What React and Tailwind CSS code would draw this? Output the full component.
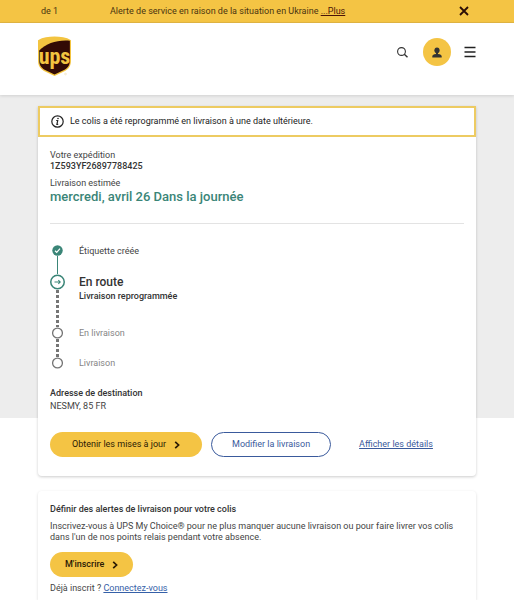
import { useState } from "react";

const steps = [
    { label: "Étiquette créée", status: "done" },
    { label: "En route", detail: "Livraison reprogrammée", status: "current" },
    { label: "En livraison", status: "pending" },
    { label: "Livraison", status: "pending" },
];

// Height of each row, up to the next circle
const rowHeights = ["min-h-[29px]", "min-h-[53px]", "min-h-[30px]", "min-h-[12px]"];

const UpsLogo = () => (
    <svg width="36" height="41" viewBox="0 0 36 41" role="img" aria-label="UPS">
        <path d="M1 4.200C6 1.400 11.500 .6 17.500 .6S29 1.400 34 4.200V24c0 5.500-2 8.700-6 10.900L17.500 40 7 34.900C3 32.700 1 29.500 1 24Z" fill="#f3c440" />
        <path d="M2.200 14.600C9.500 7.200 20 3.700 32.900 4.700V24c0 4.900-1.800 7.700-5.400 9.700L17.500 38.600 7.600 33.700C4 31.700 2.200 28.900 2.200 24Z" fill="#330b05" />
        <text x="17.500" y="27.500" textAnchor="middle" fill="#f3c440" className="font-['Roboto_Condensed','Roboto',sans-serif] text-[22px] font-bold">ups</text>
        <circle cx="28.500" cy="38" r=".9" fill="none" stroke="#ecd9a0" strokeWidth=".5" />
    </svg>
);

const Chevron = () => (
    <svg width="6" height="8" viewBox="0 0 6 8" fill="none" stroke="currentColor" strokeWidth="1.700" aria-hidden="true">
        <path d="M1.200 .8 4.600 4 1.200 7.200" />
    </svg>
);

const StepIcon = ({ status }) => {
    if (status === "done") {
        return (
            <svg width="11" height="11" viewBox="0 0 11 11" aria-hidden="true">
                <circle cx="5.500" cy="5.500" r="5.200" fill="#3a8577" />
                <path d="m3 5.800 1.700 1.500L8 3.700" fill="none" stroke="#fff" strokeWidth="1.200" />
            </svg>
        );
    }
    if (status === "current") {
        return (
            <svg width="15" height="16" viewBox="0 0 16 16" fill="none" stroke="#3a8577" aria-hidden="true">
                <circle cx="8" cy="8" r="7.200" strokeWidth="1.600" />
                <path d="M4.800 8h6M8.900 6.100 10.900 8 8.900 9.900" strokeWidth="1.100" />
            </svg>
        );
    }
    return (
        <svg width="11" height="12" viewBox="0 0 11 12" fill="none" stroke="#757575" strokeWidth="1.300" aria-hidden="true">
            <circle cx="5.500" cy="6" r="4.900" />
        </svg>
    );
};

const Step = ({ step, height, last }) => {
    const isCurrent = step.status === "current";
    const isPending = step.status === "pending";

    return (
        <li className={`flex gap-[14px] ${height}`}>
            <div className="flex w-[15px] flex-col items-center">
                <StepIcon status={step.status} />
                {!last && (
                    <div
                        className={
                            step.status === "done"
                                ? "w-px flex-1 bg-[#3a8577]"
                                : "w-[3px] flex-1 bg-[repeating-linear-gradient(#757575_0_3px,#ffffff_3px_5px)]"
                        }
                    />
                )}
            </div>
            <div>
                <p className={isCurrent ? "text-[12px] leading-4 font-medium text-[#333]" : `text-[9px] leading-3 ${isPending ? "text-[#858585]" : "text-[#444]"}`}>
                    {step.label}
                </p>
                {step.detail && <p className="text-[9px] leading-3 font-medium text-[#333]">{step.detail}</p>}
            </div>
        </li>
    );
};

const App = () => {
    const [showAlert, setShowAlert] = useState(true);

    return (
        <div className="min-h-screen bg-white font-['Roboto',sans-serif] text-[9px] leading-[11px] text-[#444]">
            {showAlert && (
                <div className="flex h-[23px] items-center border-b border-[#e3b643] bg-[#f4c444] pr-[45px] pl-[41px] text-[#4a3410]">
                    <span className="w-[69px] pt-px">de 1</span>
                    <p className="flex-1">
                        Alerte de service en raison de la situation en Ukraine{" "}
                        <a href="#alerte" className="text-[#4a1408] underline">...Plus</a>
                    </p>
                    <button type="button" aria-label="Fermer" onClick={() => setShowAlert(false)}>
                        <svg width="10" height="10" viewBox="0 0 10 10" stroke="#2b0d05" strokeWidth="1.800">
                            <path d="m1 1 8 8M9 1 1 9" />
                        </svg>
                    </button>
                </div>
            )}

            <header className="relative flex h-[72px] justify-between bg-white pt-[13px] pr-[38px] pl-[37px] shadow-[0_1px_3px_rgba(0,0,0,0.12)]">
                <a href="#accueil" className="h-[41px]">
                    <UpsLogo />
                </a>
                <div className="flex h-8 items-center">
                    <button type="button" aria-label="Rechercher" className="mr-[15px]">
                        <svg width="11" height="11" viewBox="0 0 11 11" fill="none" stroke="#333">
                            <circle cx="4.500" cy="4.500" r="3.900" strokeWidth="1.100" />
                            <path d="m7.300 7.300 3.200 3" strokeWidth="1.500" />
                        </svg>
                    </button>
                    <button type="button" aria-label="Mon compte" className="mr-[13px] flex size-7 items-center justify-center rounded-full bg-[#f4c444]">
                        <svg width="10" height="11" viewBox="0 0 10 11" fill="#333">
                            <ellipse cx="5" cy="3.300" rx="2.600" ry="2.900" />
                            <path d="M4 5.500h2v1.600c2.300.4 3.700 1 3.700 2.200V10.400H.3V9.300C.3 8.100 1.700 7.500 4 7.100Z" />
                        </svg>
                    </button>
                    <button type="button" aria-label="Menu">
                        <svg width="12" height="12" viewBox="0 0 12 12" stroke="#222" strokeWidth="1.500">
                            <path d="M.5 1.500h11M.5 6h11M.5 10.500h11" />
                        </svg>
                    </button>
                </div>
            </header>

            <main className="bg-[linear-gradient(#ededed_323px,#ffffff_323px)] px-[38px] pt-[11px]">
                <section className="rounded-b-[4px] bg-white shadow-[0_1px_3px_rgba(0,0,0,0.2)]">
                    <div className="flex h-[31px] items-center gap-[6px] border-2 border-[#edcb62] px-[11px] text-[#222]">
                        <svg width="13" height="13" viewBox="0 0 13 13" fill="none" stroke="#222" aria-hidden="true">
                            <circle cx="6.500" cy="6.500" r="5.700" strokeWidth="1.200" />
                            <path d="M5.200 5.500h1.500L5.900 9.400h1.300" strokeWidth="1.200" />
                            <circle cx="7" cy="3.500" r=".8" fill="#222" stroke="none" />
                        </svg>
                        <p>Le colis a été reprogrammé en livraison à une date ultérieure.</p>
                    </div>

                    <div className="px-3 pt-[13px] pb-[19px]">
                        <p>Votre expédition</p>
                        <p className="font-medium text-[#333]">1Z593YF26897788425</p>
                        <p className="mt-[6px]">Livraison estimée</p>
                        <h1 className="text-[13px] leading-4 font-medium text-[#3a8577]">mercredi, avril 26 Dans la journée</h1>

                        <hr className="mt-[18px] mb-[21px] border-[#e3e3e3]" />

                        <ol>
                            {steps.map((step, i) => (
                                <Step key={step.label} step={step} height={rowHeights[i]} last={i === steps.length - 1} />
                            ))}
                        </ol>

                        <h2 className="mt-[19px] font-medium text-[#333]">Adresse de destination</h2>
                        <p className="mt-[2px]">NESMY, 85 FR</p>

                        <div className="mt-5 flex items-center">
                            <button type="button" className="flex h-[25px] items-center gap-2 rounded-full bg-[#f4c444] px-[22px] text-[#2b1a05]">
                                Obtenir les mises à jour
                                <Chevron />
                            </button>
                            <button type="button" className="ml-[9px] h-[25px] rounded-full border border-[#3a5a9c] px-5 text-[#3a5a9c]">
                                Modifier la livraison
                            </button>
                            <a href="#details" className="ml-7 text-[#3a5a9c] underline">Afficher les détails</a>
                        </div>
                    </div>
                </section>

                <section className="mt-[15px] rounded-t-[4px] bg-white px-3 pt-[13px] pb-[6px] shadow-[0_1px_3px_rgba(0,0,0,0.15)]">
                    <h2 className="font-medium text-[#333]">Définir des alertes de livraison pour votre colis</h2>
                    <p className="mt-[6px]">
                        Inscrivez-vous à UPS My Choice® pour ne plus manquer aucune livraison ou pour faire livrer vos colis dans l'un de nos points relais pendant votre absence.
                    </p>
                    <button type="button" className="mt-[9px] flex h-[25px] items-center gap-2 rounded-full bg-[#f4c444] px-[15px] font-medium text-[#2b1a05]">
                        M'inscrire
                        <Chevron />
                    </button>
                    <p className="mt-[6px]">
                        Déjà inscrit ? <a href="#connexion" className="text-[#3560a8] underline">Connectez-vous</a>
                    </p>
                </section>
            </main>
        </div>
    );
};

export default App;
